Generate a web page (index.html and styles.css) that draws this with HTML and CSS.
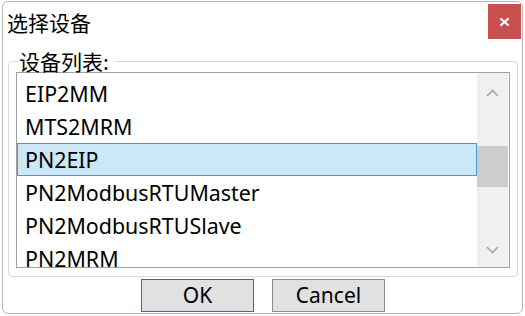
FILE: index.html
```html
<!DOCTYPE html>
<html lang="zh-CN">
<head>
    <meta charset="UTF-8">
    <meta name="viewport" content="width=device-width, initial-scale=1.0">
    <title>选择设备</title>
    <link rel="stylesheet" href="styles.css">
</head>
<body>
    <div class="dialog">
        <div class="titlebar">
            <span class="title">选择设备</span>
            <button class="close" title="关闭">
                <svg width="9" height="8" viewBox="0 0 9 8"><path d="M1 1 L8 7 M8 1 L1 7" stroke="#fff" stroke-width="2.2" stroke-linecap="square"/></svg>
            </button>
        </div>

        <fieldset class="group">
            <legend>设备列表:</legend>
            <div class="listbox">
                <ul class="items">
                    <li>EIP2MM</li>
                    <li>MTS2MRM</li>
                    <li class="selected">PN2EIP</li>
                    <li>PN2ModbusRTUMaster</li>
                    <li>PN2ModbusRTUSlave</li>
                    <li>PN2MRM</li>
                </ul>
                <div class="scrollbar">
                    <div class="arrow arrow-up">
                        <svg width="13" height="8" viewBox="0 0 13 8"><path d="M1 7 L6.5 1.5 L12 7" fill="none" stroke="#a6a6a6" stroke-width="1.6"/></svg>
                    </div>
                    <div class="track"><div class="thumb"></div></div>
                    <div class="arrow arrow-down">
                        <svg width="13" height="8" viewBox="0 0 13 8"><path d="M1 1 L6.5 6.5 L12 1" fill="none" stroke="#a6a6a6" stroke-width="1.6"/></svg>
                    </div>
                </div>
            </div>
        </fieldset>

        <div class="actions">
            <button class="btn btn-ok">OK</button>
            <button class="btn">Cancel</button>
        </div>
    </div>
</body>
</html>
```

FILE: styles.css
```css
* { box-sizing: border-box; }
body { margin: 0; background: #fff; font-family: "Noto Sans", "Noto Sans CJK SC", sans-serif; color: #000; }

.dialog { width: 521px; height: 313px; margin: 1px 0 0 2px; border: 1px solid #b5b5b5; border-radius: 6px; background: #fff; padding: 0 1px 0 2px; }

.titlebar { height: 40px; display: flex; align-items: flex-start; justify-content: space-between; }
.title { font-family: "Noto Sans CJK SC", sans-serif; font-size: 21px; line-height: 40px; padding-left: 2px; }
.close { width: 33px; height: 35px; margin-top: 2px; border: none; background: #c9504f; display: flex; align-items: center; justify-content: center; padding: 0; }

.group { margin: 8px 3px 0; padding: 0 7px 8px; border: 1px solid #d9d9d9; border-radius: 4px; }
.group legend { font-family: "Noto Sans CJK SC", sans-serif; font-size: 21px; line-height: 22px; padding: 0 5px 0 1px; margin-left: 2px; }

.listbox { height: 196px; border: 1px solid #a0a0a0; display: flex; overflow: hidden; }
.items { flex: 1; list-style: none; margin: 0; padding: 4px 0 0; font-size: 21.4px; }
.items li { height: 33px; line-height: 31px; padding-left: 7px; border: 1px solid transparent; white-space: nowrap; }
.items li.selected { background: #cce8f7; border-color: #3d9bd6; }

.scrollbar { width: 31px; margin-right: 1px; background: #f0f0f0; display: flex; flex-direction: column; }
.arrow { display: flex; align-items: center; justify-content: center; }
.arrow-up { height: 40px; }
.arrow-down { height: 34px; }
.track { flex: 1; }
.thumb { height: 41px; margin-top: 33px; background: #cdcdcd; }

.actions { display: flex; justify-content: center; gap: 18px; margin-top: 2px; }
.btn { width: 113px; height: 33px; background: #e1e1e1; border: 1px solid #8c8c8c; font-family: "Noto Sans", sans-serif; font-size: 21px; padding: 0; line-height: 31px; color: #000; }
.btn-ok { border-color: #0a78d4; }
```
